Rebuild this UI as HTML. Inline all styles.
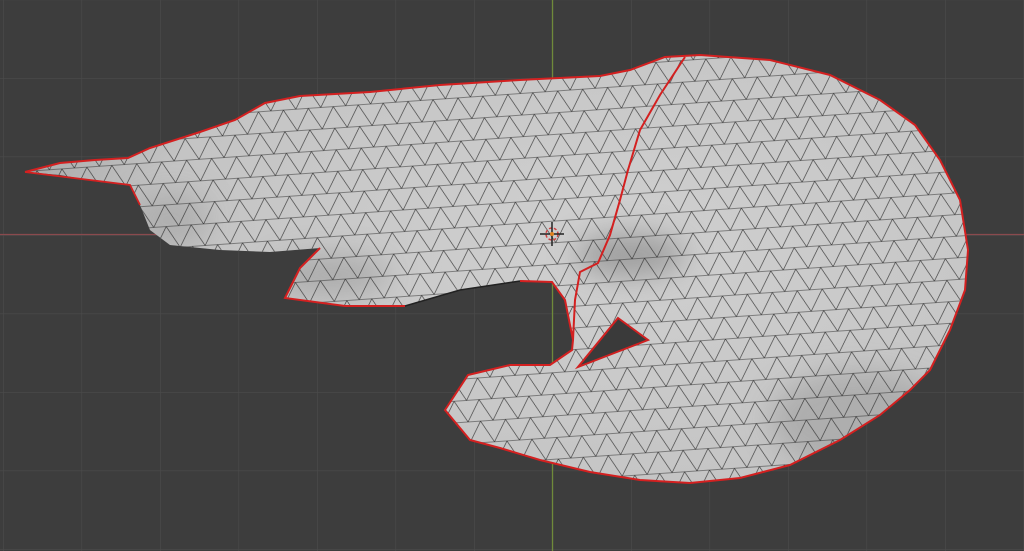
<!DOCTYPE html>
<html><head><style>
html,body{margin:0;padding:0;background:#3d3d3d;width:1024px;height:551px;overflow:hidden}
</style></head><body>
<svg width="1024" height="551" viewBox="0 0 1024 551" xmlns="http://www.w3.org/2000/svg">
<defs>
<pattern id="g" width="78.5" height="78.5" patternUnits="userSpaceOnUse" x="3" y="-0.5">
<path d="M0 0H78.5M0 0V78.5" stroke="#4b4b4b" stroke-width="1.2" fill="none"/>
</pattern>
<pattern id="tri" width="25" height="21.6" patternUnits="userSpaceOnUse" patternTransform="rotate(-4)">
<path d="M-5 0H30M-5 21.6H30M0 0L12.5 21.6L25 0M-12.5 21.6L0 0M25 0L37.5 21.6" stroke="#2e2e2e" stroke-width="0.6" fill="none"/>
</pattern>
<radialGradient id="sh" cx="0.6" cy="0.45" r="0.65">
<stop offset="0" stop-color="#d0d0d0"/>
<stop offset="0.7" stop-color="#c4c4c4"/>
<stop offset="1" stop-color="#a0a0a0"/>
</radialGradient>
<filter id="bl" x="-50%" y="-50%" width="200%" height="200%"><feGaussianBlur stdDeviation="14"/></filter>
<clipPath id="cp"><path d="M25 172L60 163L95 160L128 158L150 148L200 132L235 120L265 103L300 96L370 92L440 85L520 80L600 76L630 70L665 57L700 55L770 60L830 75L880 100L915 125L940 160L960 200L968 250L965 290L950 330L930 370L910 390L880 415L840 440L790 465L740 478L690 483L640 480L590 472L540 460L500 448L470 440L445 410L468 375L510 365L550 365L572 350L573 340L565 300L552 282L520 281L460 290L405 306L345 306L285 298L300 268L320 248L270 252L220 250L170 245L150 230L140 205L130 185L100 182L60 175Z"/></clipPath>
</defs>
<rect width="1024" height="551" fill="#3d3d3d"/>
<rect width="1024" height="551" fill="url(#g)"/>
<line x1="0" y1="234.5" x2="1024" y2="234.5" stroke="#8a4a4e" stroke-width="1.3"/>
<line x1="552.5" y1="0" x2="552.5" y2="551" stroke="#6f8a3a" stroke-width="1.3"/>
<g clip-path="url(#cp)">
<rect width="1024" height="551" fill="url(#sh)"/>
<g filter="url(#bl)">
<ellipse cx="630" cy="255" rx="55" ry="22" fill="#7e7e7e" opacity="0.6"/>
<ellipse cx="330" cy="275" rx="60" ry="20" fill="#8a8a8a" opacity="0.45"/>
<ellipse cx="860" cy="420" rx="90" ry="50" fill="#909090" opacity="0.45"/>
<ellipse cx="170" cy="220" rx="40" ry="30" fill="#909090" opacity="0.4"/>
</g>
<rect width="1024" height="551" fill="url(#tri)"/>
</g>
<path d="M618 318L648 340L578 367Z" fill="#3a3a3a" stroke="#d02020" stroke-width="2"/>
<path d="M25 172L60 163L95 160L128 158L150 148L200 132L235 120L265 103L300 96L370 92L440 85L520 80L600 76L630 70L665 57L700 55L770 60L830 75L880 100L915 125L940 160L960 200L968 250L965 290L950 330L930 370L910 390L880 415L840 440L790 465L740 478L690 483L640 480L590 472L540 460L500 448L470 440L445 410L468 375L510 365L550 365L572 350L573 340L565 300L552 282L520 281" fill="none" stroke="#d42020" stroke-width="2"/>
<path d="M405 306L345 306L285 298L300 268L320 248" fill="none" stroke="#d42020" stroke-width="2"/>
<path d="M25 172L130 185L140 205" fill="none" stroke="#d42020" stroke-width="1.8"/>
<path d="M520 281L460 290L405 306" fill="none" stroke="#222" stroke-width="1.5"/>
<path d="M685 57L660 95L640 130L628 170L620 200L610 235L598 263L580 272L575 300L573 340" fill="none" stroke="#d42020" stroke-width="2"/>
<g stroke-width="1.5" fill="none">
<circle cx="552" cy="234" r="6" stroke="#d04040" stroke-dasharray="3 2"/>
<path d="M540 234H564M552 222V246" stroke="#222"/>
</g>
<circle cx="552" cy="234" r="2" fill="#e08020"/>
</svg>
</body></html>
